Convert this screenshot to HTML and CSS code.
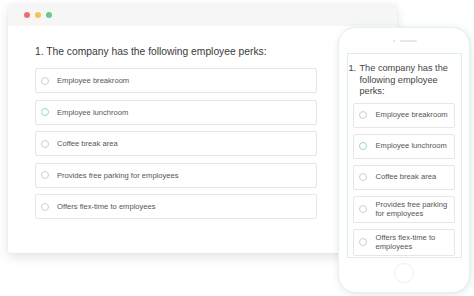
FILE: index.html
```html
<!DOCTYPE html>
<html lang="en">
<head>
    <meta charset="UTF-8">
    <meta name="viewport" content="width=device-width, initial-scale=1.0">
    <title>Survey preview</title>
    <link rel="stylesheet" href="styles.css">
</head>
<body>
    <div class="window">
        <div class="titlebar">
            <span class="dot red"></span>
            <span class="dot yellow"></span>
            <span class="dot green"></span>
        </div>
        <div class="window-body">
            <h2 class="question">1. The company has the following employee perks:</h2>
            <div class="options">
                <div class="option"><span class="radio"></span>Employee breakroom</div>
                <div class="option"><span class="radio hover"></span>Employee lunchroom</div>
                <div class="option"><span class="radio"></span>Coffee break area</div>
                <div class="option"><span class="radio"></span>Provides free parking for employees</div>
                <div class="option"><span class="radio"></span>Offers flex-time to employees</div>
            </div>
        </div>
    </div>

    <div class="phone">
        <div class="speaker">
            <span class="cam"></span>
            <span class="grill"></span>
        </div>
        <div class="screen">
            <div class="m-question">
                <span class="num">1.</span>
                <span class="m-text">The company has the following employee perks:</span>
            </div>
            <div class="m-options">
                <div class="m-option"><span class="radio"></span><span>Employee breakroom</span></div>
                <div class="m-option"><span class="radio hover"></span><span>Employee lunchroom</span></div>
                <div class="m-option"><span class="radio"></span><span>Coffee break area</span></div>
                <div class="m-option"><span class="radio"></span><span>Provides free parking for employees</span></div>
                <div class="m-option"><span class="radio"></span><span>Offers flex-time to employees</span></div>
            </div>
        </div>
        <div class="home"></div>
    </div>
</body>
</html>
```

FILE: styles.css
```css
body {
    font-family: "Liberation Sans", Arial, sans-serif;
    margin: 0;
    background: #fff;
    width: 474px;
    height: 296px;
    overflow: hidden;
    position: relative;
}

.window {
    margin: 4px 0 0 8px;
    width: 389px;
    height: 249px;
    background: #fff;
    border-radius: 3px;
    box-shadow: 0 4px 12px rgba(0, 0, 0, 0.11), 0 0 2px rgba(0, 0, 0, 0.05);
    overflow: hidden;
}

.titlebar {
    height: 22px;
    background: #f6f6f6;
    display: flex;
    align-items: center;
    gap: 5px;
    padding-left: 16px;
}

.dot {
    width: 6px;
    height: 6px;
    border-radius: 50%;
}

.red { background: #ef6f6f; }
.yellow { background: #f4c358; }
.green { background: #67c98a; }

.window-body {
    padding: 19px 0 0 27px;
}

.question {
    margin: 0 0 9px 0;
    font-weight: normal;
    font-size: 10.3px;
    line-height: 14px;
    color: #3a3a3a;
}

.options {
    display: flex;
    flex-direction: column;
    gap: 6.5px;
    width: 282px;
}

.option {
    height: 25px;
    box-sizing: border-box;
    border: 1px solid #e6e6e6;
    border-radius: 2px;
    display: flex;
    align-items: center;
    padding-left: 5px;
    font-size: 7.6px;
    color: #555;
}

.radio {
    width: 8px;
    height: 8px;
    box-sizing: border-box;
    border: 1px solid #cfcfcf;
    border-radius: 50%;
    margin-right: 8px;
    flex-shrink: 0;
}

.radio.hover {
    border-color: #9fd6cb;
}

.phone {
    position: absolute;
    left: 338px;
    top: 27px;
    width: 132px;
    height: 266px;
    box-sizing: border-box;
    border: 1px solid #e9eeee;
    border-radius: 18px;
    background: #fff;
    box-shadow: 0 2px 8px rgba(0, 0, 0, 0.07), 2px 0 6px rgba(150, 220, 205, 0.15);
    display: flex;
    flex-direction: column;
    align-items: center;
}

.speaker {
    height: 25px;
    display: flex;
    align-items: center;
    gap: 5px;
    padding-left: 2px;
}

.cam {
    width: 2px;
    height: 2px;
    border-radius: 50%;
    background: #dde3e3;
}

.grill {
    width: 17px;
    height: 2px;
    border-radius: 1px;
    background: #e3e8e8;
}

.screen {
    width: 115px;
    height: 205px;
    box-sizing: border-box;
    border: 1px solid #deecea;
    padding: 9px 6px 0 1px;
}

.m-question {
    display: flex;
    font-size: 9.2px;
    line-height: 11.5px;
    color: #444;
    margin-bottom: 5px;
}

.num {
    width: 11px;
    flex-shrink: 0;
}

.m-options {
    display: flex;
    flex-direction: column;
    gap: 6px;
    margin-left: 4px;
}

.m-option {
    min-height: 25px;
    box-sizing: border-box;
    border: 1px solid #e6e6e6;
    border-radius: 2px;
    display: flex;
    align-items: center;
    padding: 3px 2px 3px 5px;
    font-size: 7.6px;
    line-height: 9.5px;
    color: #555;
}

.m-option .radio {
    margin-right: 9px;
}

.home {
    margin-top: 5px;
    width: 20px;
    height: 20px;
    box-sizing: border-box;
    border: 1px solid #eef0f0;
    border-radius: 50%;
}
```
